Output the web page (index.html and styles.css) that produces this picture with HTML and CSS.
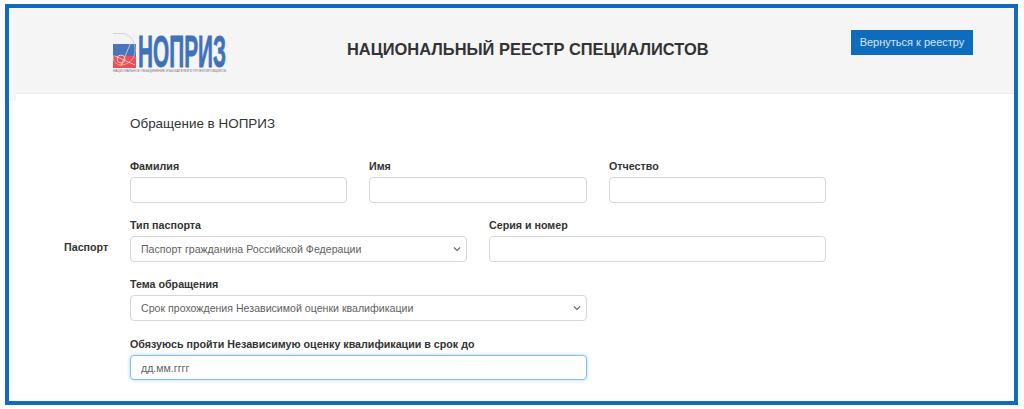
FILE: index.html
```html
<!DOCTYPE html>
<html lang="ru">
<head>
<meta charset="utf-8">
<title>Национальный реестр специалистов</title>
<link rel="stylesheet" href="styles.css">
</head>
<body>
<div class="frame">
  <header class="header">
    <div class="logo">
      <svg class="logo-svg" width="114" height="37" viewBox="0 0 114 37">
        <rect x="0" y="1" width="23" height="11" fill="#f4f2f2"/>
        <rect x="0" y="12" width="23" height="12" fill="#4a75ba"/>
        <rect x="0" y="24" width="23" height="12" fill="#ea5056"/>
        <path d="M0 1.5H10C18 3 23 10 22 20C21 28 15 33 7 33C2 32 -1 28 1 23" fill="none" stroke="#c9cbd2" stroke-width="0.8"/>
        <path d="M2 24L22 33M8 34L21 3" fill="none" stroke="#e9e9ec" stroke-width="0.7"/>
        <circle cx="8" cy="27" r="4" fill="none" stroke="#f3d7d8" stroke-width="0.9"/>
        <text class="logo-word" x="25" y="35" textLength="88" lengthAdjust="spacingAndGlyphs">НОПРИЗ</text>
      </svg>
      <span class="logo-sub">НАЦИОНАЛЬНОЕ ОБЪЕДИНЕНИЕ ИЗЫСКАТЕЛЕЙ И ПРОЕКТИРОВЩИКОВ</span>
    </div>
    <h1 class="title">НАЦИОНАЛЬНЫЙ РЕЕСТР СПЕЦИАЛИСТОВ</h1>
    <a class="back-btn" href="#">Вернуться к реестру</a>
  </header>
  <main class="content">
    <h2 class="form-title">Обращение в НОПРИЗ</h2>
    <div class="row row-name">
      <div class="field w-217"><label class="label">Фамилия</label><input class="control" type="text"></div>
      <div class="field w-218"><label class="label">Имя</label><input class="control" type="text"></div>
      <div class="field w-217"><label class="label">Отчество</label><input class="control" type="text"></div>
    </div>
    <div class="row row-passport">
      <span class="side-label">Паспорт</span>
      <div class="field w-337"><label class="label">Тип паспорта</label>
        <select class="control select"><option>Паспорт гражданина Российской Федерации</option></select></div>
      <div class="field w-337"><label class="label">Серия и номер</label><input class="control" type="text"></div>
    </div>
    <div class="field w-457 field-topic"><label class="label">Тема обращения</label>
      <select class="control select"><option>Срок прохождения Независимой оценки квалификации</option></select></div>
    <div class="field w-457 field-date"><label class="label">Обязуюсь пройти Независимую оценку квалификации в срок до</label>
      <input class="control focused" type="text" value="дд.мм.гггг"></div>
  </main>
</div>
</body>
</html>
```
FILE: styles.css
```css
* { box-sizing: border-box; }
html, body { margin: 0; height: 409px; overflow: hidden; background: #fff; }
body { font-family: "Liberation Sans", Arial, sans-serif; color: #333; }
.frame {
  width: 1013px;
  height: 401px;
  margin: 4px 0 0 5px;
  border: 4px solid #0f6cbd;
  overflow: hidden;
  background: linear-gradient(#f5f5f5, #f5f5f5) left top / 7px 93px no-repeat, #fff;
}
.header {
  height: 86px;
  background: #f5f5f5;
  display: flex;
  align-items: flex-start;
  position: relative;
}
.header::after {
  content: "";
  position: absolute;
  left: 7px;
  right: 0;
  bottom: 0;
  height: 1px;
  background: #eee;
}
.logo { width: 114px; margin-left: 104px; margin-top: 24px; flex: none; }
.logo-svg { display: block; overflow: visible; }
.logo-word { font-family: "Liberation Sans", sans-serif; font-weight: 700; font-size: 45px; fill: #3f72bb; stroke: #3f72bb; stroke-width: 0.9px; }
.logo-sub {
  display: block;
  font-size: 3.15px;
  line-height: 5px;
  width: 114px;
  white-space: nowrap;
  color: #777;
}
.title {
  margin: 31px 0 0 120px;
  font-size: 16.45px;
  line-height: 20px;
  font-weight: 700;
  color: #333;
  white-space: nowrap;
}
.back-btn {
  margin: 22px 41px 0 auto;
  width: 122px;
  height: 25px;
  background: #0f6cbd;
  color: #d8e6f4;
  font-size: 11px;
  line-height: 25px;
  text-align: center;
  text-decoration: none;
  flex: none;
}
.content { padding: 21px 0 0 121px; }
.form-title { margin: 0 0 26px; font-size: 13.45px; line-height: 18px; font-weight: 400; color: #333; }
.row { display: flex; gap: 22px; }
.row-passport { position: relative; margin-top: 15px; }
.side-label { position: absolute; left: -66px; top: 22px; font-size: 10.7px; font-weight: 700; line-height: 14px; }
.field { display: flex; flex-direction: column; }
.w-217 { width: 217px; }
.w-218 { width: 218px; }
.w-337 { width: 337px; }
.w-457 { width: 457px; }
.field-topic { margin-top: 15px; }
.field-date { margin-top: 16px; }
.label { font-size: 10.7px; line-height: 14px; font-weight: 700; color: #333; margin-bottom: 4px; white-space: nowrap; }
.control {
  display: block;
  width: 100%;
  height: 26px;
  padding: 0 10px;
  border: 1px solid #d4d6d8;
  border-radius: 4px;
  background: #fff;
  font-family: inherit;
  font-size: 10.6px;
  color: #5f5f5f;
  outline: none;
}
.select {
  appearance: none;
  -webkit-appearance: none;
  background: #fff url("data:image/svg+xml,%3Csvg xmlns='http://www.w3.org/2000/svg' width='8' height='6' viewBox='0 0 8 6'%3E%3Cpath d='M1 1.5L4 4.5L7 1.5' fill='none' stroke='%23666' stroke-width='1.1'/%3E%3C/svg%3E") no-repeat right 5px center;
}
.focused { height: 25px; border-color: #80bdff; box-shadow: 0 0 3px 1px rgba(128, 189, 255, .4); }
```
